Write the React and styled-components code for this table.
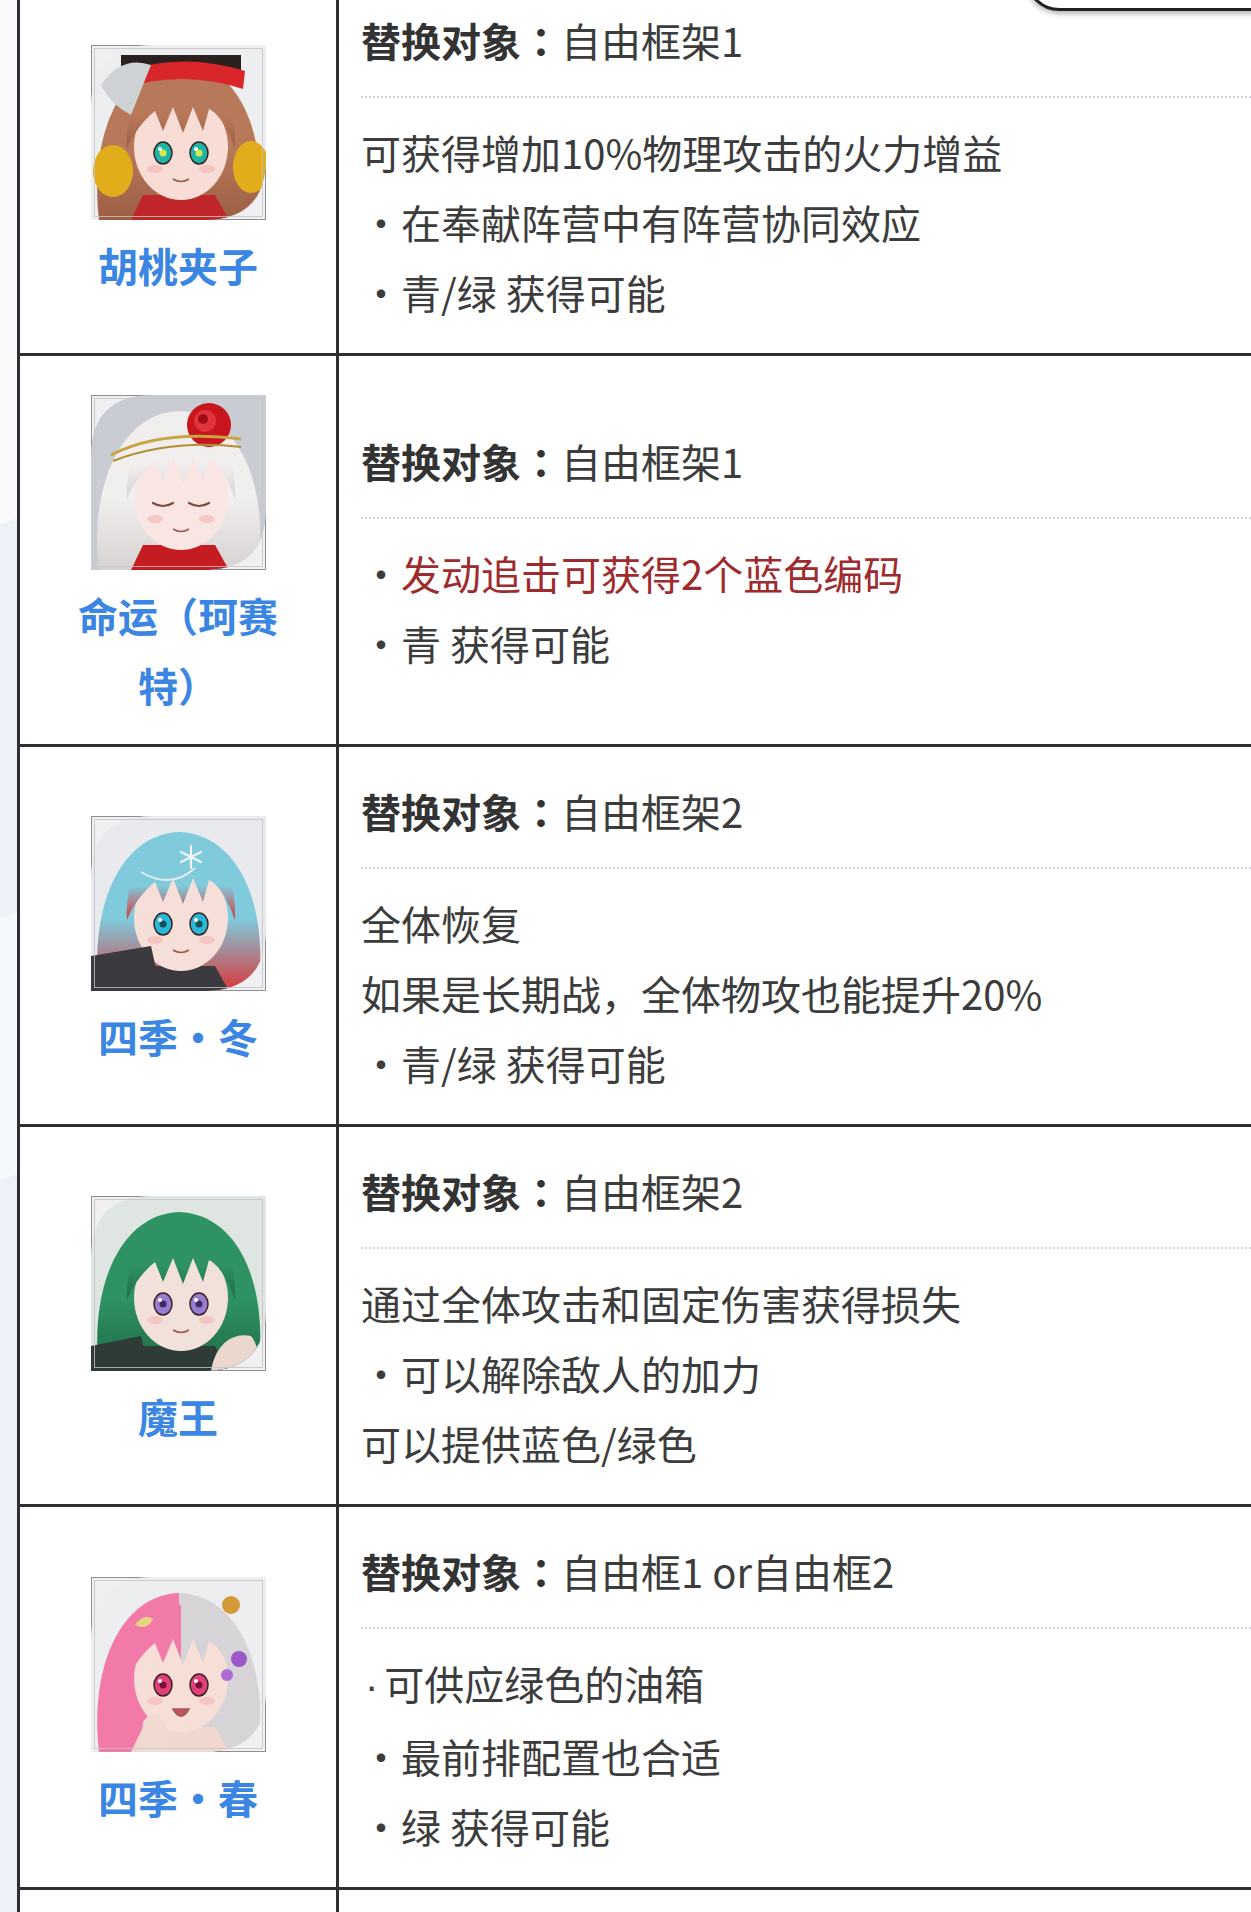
import React, { useId } from "react";
import styled, { createGlobalStyle } from "styled-components";

const GlobalStyle = createGlobalStyle`
  html, body {
    margin: 0;
    padding: 0;
    overflow: hidden;
    background: #eef2f7;
    font-family: "Noto Sans CJK SC", "Noto Sans", sans-serif;
  }
`;

const Page = styled.div`
  position: relative;
  display: flow-root;
  min-height: 1912px;
  padding-left: 17px;
  background:
    linear-gradient(160deg, rgba(255,255,255,0.6) 0 20%, transparent 20% 35%, rgba(255,255,255,0.5) 35% 45%, transparent 45%),
    #edf2f8;
`;

// the rounded tab hanging in from the top right
const FloatingTab = styled.div`
  position: absolute;
  top: -58px;
  left: 1025px;
  width: 280px;
  height: 69px;
  box-sizing: border-box;
  background: #fff;
  border: 3px solid #222;
  border-radius: 36px;
  box-shadow: 0 3px 5px rgba(0, 0, 0, 0.28);
  z-index: 2;
`;

const Sheet = styled.table`
  width: 1300px;
  margin-top: -24px;
  table-layout: fixed;
  border-collapse: separate;
  border-spacing: 0;
  background: #fff;
  border-left: 3px solid #2d2f33;
`;

const UnitCell = styled.td`
  width: 268px;
  padding: 39px 24px 24px;
  vertical-align: middle;
  text-align: center;
  border-right: 3px solid #2d2f33;
  border-bottom: 3px solid #2d2f33;
`;

const InfoCell = styled.td`
  padding: 29px 24px 26px 22px;
  vertical-align: middle;
  border-bottom: 3px solid #2d2f33;
  height: ${(p) => (p.$empty ? "220px" : "auto")};
`;

const UnitName = styled.div`
  max-width: 230px;
  margin: 10px auto 0;
  font-size: 40px;
  line-height: 70px;
  font-weight: 700;
  color: #3a86e2;
`;

const Target = styled.div`
  font-size: 40px;
  line-height: 70px;
  color: #3c3c3c;
  white-space: nowrap;

  b {
    font-weight: 700;
    color: #333;
  }
`;

// the title colon sits centred in its em box
const Colon = styled.span`
  font-family: "Noto Sans CJK TC", "Noto Sans CJK SC", sans-serif;
`;

const Divider = styled.div`
  height: 2px;
  margin: 21px 0 19px;
  background: repeating-linear-gradient(to right, #cfd4de 0 2px, transparent 2px 4px);
`;

const Line = styled.div`
  font-size: 40px;
  line-height: 70px;
  white-space: nowrap;
  color: ${(p) => (p.$tone === "red" ? "#9e2b2e" : "#3c3c3c")};
`;

const SmallDot = styled.span`
  font-family: "Liberation Sans", sans-serif;
  padding: 0 6px 0 4px;
`;

const Frame = styled.svg`
  display: block;
  width: 175px;
  height: 175px;
  margin: 0 auto;
`;

function Portrait({ look }) {
  const id = useId().replace(/:/g, "");
  const clip = `clip${id}`;
  const grad = `hair${id}`;
  return (
    <Frame viewBox="0 0 175 175">
      <defs>
        <clipPath id={clip}>
          <path d="M0 62 Q0 0 62 0 L175 0 L175 113 Q175 175 113 175 L0 175 Z" />
        </clipPath>
        <linearGradient id={grad} x1="0" y1="0" x2={look.split ? "1" : "0"} y2={look.split ? "0" : "1"}>
          <stop offset="0" stopColor={look.hairA} />
          <stop offset={look.split ? "0.5" : "0.55"} stopColor={look.hairA} />
          <stop offset={look.split ? "0.5" : "1"} stopColor={look.hairB} />
          <stop offset="1" stopColor={look.hairB} />
        </linearGradient>
      </defs>
      <rect x="0.5" y="0.5" width="174" height="174" fill="#f0f0f2" stroke="#8f8f8f" />
      <g clipPath={`url(#${clip})`}>
        <rect width="175" height="175" fill={look.bg} />
        <path d="M8 175 C-2 90 30 18 88 16 C148 18 178 90 167 175 Z" fill={`url(#${grad})`} />
        <path d="M40 175 L52 150 L124 150 L138 175 Z" fill={look.cloth} />
        <ellipse cx="90" cy="102" rx="47" ry="53" fill={look.skin} />
        <path
          d="M36 104 C34 48 64 28 90 28 C120 28 146 48 144 104 C136 80 126 68 118 64 L112 86 L102 62 L92 88 L82 62 L72 86 L64 66 C54 74 42 88 36 104 Z"
          fill={`url(#${grad})`}
        />
        {look.closed ? (
          <g stroke="#7a4a44" strokeWidth="2.2" fill="none" strokeLinecap="round">
            <path d="M62 108 Q72 114 82 108" />
            <path d="M98 108 Q108 114 118 108" />
          </g>
        ) : (
          <g>
            <ellipse cx="72" cy="108" rx="9" ry="11" fill={look.eye} stroke="#3a2222" strokeWidth="1.5" />
            <ellipse cx="108" cy="108" rx="9" ry="11" fill={look.eye} stroke="#3a2222" strokeWidth="1.5" />
            <circle cx="72" cy="108" r="3.5" fill={look.pupil} />
            <circle cx="108" cy="108" r="3.5" fill={look.pupil} />
            <circle cx="69" cy="104" r="2" fill="#fff" />
            <circle cx="105" cy="104" r="2" fill="#fff" />
          </g>
        )}
        <ellipse cx="64" cy="124" rx="8" ry="4" fill="#f3b9b9" opacity="0.7" />
        <ellipse cx="116" cy="124" rx="8" ry="4" fill="#f3b9b9" opacity="0.7" />
        <path d={look.open ? "M82 132 Q90 146 98 132 Z" : "M82 134 Q90 139 98 134"} fill={look.open ? "#c8505c" : "none"} stroke="#9a5a50" strokeWidth="1.6" />
        {look.accent === "cap" && (
          <g>
            <path d="M30 10 L150 10 L150 26 L30 30 Z" fill="#2a2020" />
            <path d="M28 28 Q90 6 154 26 L152 44 Q90 24 30 44 Z" fill="#d8262a" />
            <path d="M10 40 Q30 10 60 20 L40 70 Q20 60 10 40 Z" fill="#cfd2d4" />
            <ellipse cx="22" cy="126" rx="20" ry="26" fill="#e2ad1a" />
            <ellipse cx="160" cy="122" rx="18" ry="26" fill="#e2ad1a" />
            <path d="M62 150 L90 166 L118 150 L124 175 L56 175 Z" fill="#c0272b" />
          </g>
        )}
        {look.accent === "rose" && (
          <g>
            <circle cx="118" cy="30" r="22" fill="#c9151e" />
            <circle cx="114" cy="26" r="11" fill="#e0343a" />
            <circle cx="112" cy="24" r="5" fill="#a00f16" />
            <path d="M20 60 Q70 34 150 44" stroke="#c9a442" strokeWidth="3" fill="none" />
            <path d="M22 66 Q80 44 150 52" stroke="#b38f34" strokeWidth="2" fill="none" />
            <path d="M66 152 L90 164 L114 152 L120 175 L60 175 Z" fill="#c51c22" />
          </g>
        )}
        {look.accent === "snow" && (
          <g>
            <path d="M0 140 L60 130 L70 175 L0 175 Z" fill="#3a3a3e" />
            <g stroke="#f2f6fa" strokeWidth="2.2" strokeLinecap="round">
              <path d="M100 30 L100 52" />
              <path d="M90 36 L110 46" />
              <path d="M90 46 L110 36" />
            </g>
            <path d="M50 56 Q80 74 104 52" stroke="#e6eef2" strokeWidth="2" fill="none" />
          </g>
        )}
        {look.accent === "hand" && (
          <g>
            <path d="M120 175 C124 150 140 136 160 140 C168 150 170 168 165 175 Z" fill="#ecd7cf" />
            <path d="M0 150 L50 140 L58 175 L0 175 Z" fill="#2f3b36" />
          </g>
        )}
        {look.accent === "flowers" && (
          <g>
            <circle cx="148" cy="82" r="8" fill="#9b57c7" />
            <circle cx="136" cy="98" r="6" fill="#b06ad6" />
            <circle cx="140" cy="28" r="9" fill="#d49a3a" />
            <path d="M44 48 Q52 36 62 42 Q56 54 44 48 Z" fill="#e6d684" />
            <path d="M52 145 Q64 128 76 150 L80 175 L50 175 Z" fill="#f1dad2" />
          </g>
        )}
      </g>
      <rect x="3.5" y="3.5" width="168" height="168" fill="none" stroke="#c4c4c8" strokeWidth="0.8" />
    </Frame>
  );
}

const units = [
  {
    name: "胡桃夹子",
    target: "自由框架1",
    look: { bg: "#eceef0", hairA: "#b8785a", hairB: "#9c5f44", skin: "#f7ddd6", eye: "#1fb5a6", pupil: "#d4e84a", cloth: "#c0272b", accent: "cap" },
    lines: [
      { text: "可获得增加10%物理攻击的火力增益" },
      { text: "・在奉献阵营中有阵营协同效应" },
      { text: "・青/绿 获得可能" },
    ],
  },
  {
    name: "命运（珂赛特）",
    target: "自由框架1",
    look: { bg: "#c9ccd2", hairA: "#f1eeee", hairB: "#d8d2d2", skin: "#f9e6e2", eye: "#555", pupil: "#333", cloth: "#c51c22", accent: "rose", closed: true },
    lines: [
      { text: "・", red: "发动追击可获得2个蓝色编码" },
      { text: "・青 获得可能" },
    ],
  },
  {
    name: "四季・冬",
    target: "自由框架2",
    look: { bg: "#e8eaee", hairA: "#7fcadb", hairB: "#d9363a", skin: "#f6dfd8", eye: "#2ab8d8", pupil: "#14505e", cloth: "#3a3a3e", accent: "snow" },
    lines: [
      { text: "全体恢复" },
      { text: "如果是长期战，全体物攻也能提升20%" },
      { text: "・青/绿 获得可能" },
    ],
  },
  {
    name: "魔王",
    target: "自由框架2",
    look: { bg: "#dfe6e2", hairA: "#2f9262", hairB: "#1f6a48", skin: "#f2e0da", eye: "#9a7bd2", pupil: "#3c2a60", cloth: "#2f3b36", accent: "hand" },
    lines: [
      { text: "通过全体攻击和固定伤害获得损失" },
      { text: "・可以解除敌人的加力" },
      { text: "可以提供蓝色/绿色" },
    ],
  },
  {
    name: "四季・春",
    target: "自由框1 or自由框2",
    look: { bg: "#eceef0", hairA: "#f27aa8", hairB: "#d6d4d6", skin: "#f7dfd8", eye: "#e0417a", pupil: "#7a1030", cloth: "#f0d8d0", accent: "flowers", split: true, open: true },
    lines: [
      { dot: true, text: "可供应绿色的油箱" },
      { text: "・最前排配置也合适" },
      { text: "・绿 获得可能" },
    ],
  },
];

export default function App() {
  return (
    <>
      <GlobalStyle />
      <Page>
        <FloatingTab />
        <Sheet>
          <tbody>
            {units.map((u) => (
              <tr key={u.name}>
                <UnitCell>
                  <Portrait look={u.look} />
                  <UnitName>{u.name}</UnitName>
                </UnitCell>
                <InfoCell>
                  <Target>
                    <b>
                      替换对象<Colon>：</Colon>
                    </b>
                    {u.target}
                  </Target>
                  <Divider />
                  {u.lines.map((l, i) => (
                    <Line key={i}>
                      {l.dot && <SmallDot>·</SmallDot>}
                      {l.text}
                      {l.red && <Line as="span" $tone="red">{l.red}</Line>}
                    </Line>
                  ))}
                </InfoCell>
              </tr>
            ))}
            <tr>
              <UnitCell />
              <InfoCell $empty />
            </tr>
          </tbody>
        </Sheet>
      </Page>
    </>
  );
}
